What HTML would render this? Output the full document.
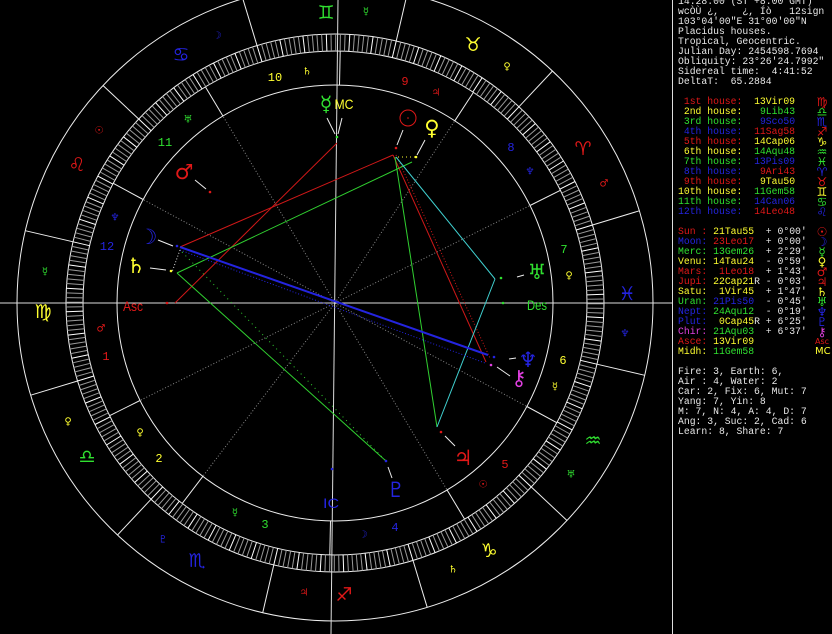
<!DOCTYPE html>
<html><head><meta charset="utf-8">
<style>
html,body{margin:0;padding:0;background:#000;width:832px;height:634px;overflow:hidden}
#c{position:absolute;left:0;top:0}
#p{position:absolute;left:678px;top:-3px;margin:0;font-family:"Liberation Mono",monospace;font-size:9.75px;line-height:10px;color:#e8e8e8;white-space:pre}
.r{color:#e01818}.y{color:#ffff30}.g{color:#30e030}.b{color:#2424e0}.m{color:#e040e0}
#vl{position:absolute;left:672px;top:0;width:1px;height:634px;background:#ddd}
.gl{position:absolute;left:815px;width:14px;text-align:center;font-family:"DejaVu Sans",sans-serif;font-size:12px;line-height:12px}
</style></head><body>
<svg id="c" width="672" height="634" xmlns="http://www.w3.org/2000/svg" font-family="DejaVu Sans, sans-serif" text-anchor="middle" dominant-baseline="central">
<g id="geo"></g>
<line x1="0" y1="303" x2="672" y2="303" stroke="#ddd" stroke-width="1"/>
<line x1="338" y1="0" x2="331" y2="634" stroke="#ddd" stroke-width="1"/>
<g stroke-width="1" fill="none">
<line x1="175" y1="303" x2="337" y2="143" stroke="#d01818"/>
<line x1="180" y1="247" x2="393" y2="155" stroke="#d01818"/>
<line x1="393" y1="155" x2="486" y2="362" stroke="#d01818"/>
<line x1="396" y1="155" x2="490" y2="358" stroke="#d01818" stroke-dasharray="1 2"/>
<line x1="177" y1="273" x2="412" y2="162" stroke="#30d030"/>
<line x1="177" y1="273" x2="386" y2="461" stroke="#30d030"/>
<line x1="182" y1="252" x2="386" y2="461" stroke="#30d030" stroke-dasharray="1 4"/>
<line x1="395" y1="157" x2="437" y2="427" stroke="#30d030"/>
<line x1="396" y1="157" x2="495" y2="279" stroke="#40d0d0"/>
<line x1="495" y1="279" x2="437" y2="427" stroke="#40d0d0"/>
<line x1="180" y1="247" x2="488" y2="355" stroke="#2424e0" stroke-width="2"/>
<line x1="180" y1="250" x2="485" y2="363" stroke="#2424e0" stroke-dasharray="1 2"/>
<line x1="180" y1="250" x2="172" y2="272" stroke="#ddd" stroke-dasharray="1 2"/>
<line x1="398" y1="157" x2="415" y2="157" stroke="#ffff30" stroke-dasharray="1 3"/>
</g>
<g stroke="#eee" stroke-width="1">
<line x1="403" y1="130" x2="397" y2="145"/><line x1="425" y1="140" x2="417" y2="155"/>
<line x1="327" y1="118" x2="335" y2="134"/><line x1="342" y1="118" x2="338" y2="134"/>
<line x1="195" y1="180" x2="206" y2="189"/><line x1="158" y1="240" x2="173" y2="246"/>
<line x1="150" y1="268" x2="166" y2="270"/><line x1="517" y1="277" x2="524" y2="275"/>
<line x1="509" y1="359" x2="516" y2="358"/><line x1="497" y1="367" x2="510" y2="376"/>
<line x1="445" y1="436" x2="455" y2="446"/><line x1="388" y1="467" x2="392" y2="478"/>
</g>
<g>
<circle cx="396" cy="148" r="1.3" fill="#e01818"/><circle cx="416" cy="157" r="1.3" fill="#ffff30"/>
<circle cx="337" cy="137" r="1.3" fill="#30e030"/><circle cx="210" cy="192" r="1.3" fill="#e01818"/>
<circle cx="177" cy="246" r="1.3" fill="#2424e0"/><circle cx="171" cy="271" r="1.3" fill="#ffff30"/>
<circle cx="167" cy="303" r="1.3" fill="#e01818"/><circle cx="501" cy="278" r="1.3" fill="#30e030"/>
<circle cx="503" cy="303" r="1.3" fill="#30e030"/><circle cx="494" cy="357" r="1.3" fill="#2424e0"/>
<circle cx="491" cy="365" r="1.3" fill="#e040e0"/><circle cx="441" cy="432" r="1.3" fill="#e01818"/>
<circle cx="386" cy="461" r="1.3" fill="#2424e0"/><circle cx="332" cy="469" r="1.3" fill="#2424e0"/>
</g>
<g font-size="19">
<text x="583" y="149" fill="#e01818">♈︎</text><text x="473" y="45" fill="#ffff30">♉︎</text>
<text x="326" y="13" fill="#30e030">♊︎</text><text x="181" y="55" fill="#2424e0">♋︎</text>
<text x="77" y="165" fill="#e01818">♌︎</text><text x="43" y="312" fill="#ffff30">♍︎</text>
<text x="87" y="457" fill="#30e030">♎︎</text><text x="197" y="561" fill="#2424e0">♏︎</text>
<text x="344" y="595" fill="#e01818">♐︎</text><text x="489" y="551" fill="#ffff30">♑︎</text>
<text x="593" y="441" fill="#30e030">♒︎</text><text x="627" y="294" fill="#2424e0">♓︎</text>
</g>
<g font-size="10">
<text x="604" y="184" fill="#e01818">♂</text><text x="507" y="67" fill="#ffff30">♀</text>
<text x="366" y="12" fill="#30e030">☿</text><text x="217" y="36" fill="#2424e0">☽</text>
<text x="99" y="131" fill="#e01818">☉</text><text x="45" y="272" fill="#30e030">☿</text>
<text x="68" y="422" fill="#ffff30">♀</text><text x="163" y="540" fill="#2424e0">♇</text>
<text x="304" y="593" fill="#e01818">♃</text><text x="453" y="570" fill="#ffff30">♄</text>
<text x="571" y="475" fill="#30e030">♅</text><text x="625" y="334" fill="#2424e0">♆</text>
</g>
<g font-family="Liberation Mono, monospace" font-size="12">
<text x="275" y="78" fill="#ffff30">10</text><text x="165" y="143" fill="#30e030">11</text>
<text x="107" y="247" fill="#2424e0">12</text><text x="106" y="357" fill="#e01818">1</text>
<text x="159" y="459" fill="#ffff30">2</text><text x="265" y="525" fill="#30e030">3</text>
<text x="395" y="528" fill="#2424e0">4</text><text x="505" y="465" fill="#e01818">5</text>
<text x="563" y="361" fill="#ffff30">6</text><text x="564" y="250" fill="#30e030">7</text>
<text x="511" y="148" fill="#2424e0">8</text><text x="405" y="82" fill="#e01818">9</text>
</g>
<g font-size="10">
<text x="307" y="72" fill="#ffff30">♄</text><text x="188" y="120" fill="#30e030">♅</text>
<text x="115" y="218" fill="#2424e0">♆</text><text x="101" y="329" fill="#e01818">♂</text>
<text x="140" y="433" fill="#ffff30">♀</text><text x="235" y="513" fill="#30e030">☿</text>
<text x="363" y="535" fill="#2424e0">☽</text><text x="483" y="485" fill="#e01818">☉</text>
<text x="555" y="387" fill="#ffff30">☿</text><text x="569" y="276" fill="#ffff30">♀</text>
<text x="530" y="172" fill="#2424e0">♆</text><text x="436" y="93" fill="#e01818">♃</text>
</g>
<g font-size="21">
<circle cx="408" cy="118" r="8" fill="none" stroke="#e01818"/><circle cx="408" cy="118" r="0.8" fill="#e01818"/>
<text x="432" y="128" fill="#ffff30">♀</text>
<text x="326" y="104" fill="#30e030">☿</text>
<text x="184" y="172" fill="#e01818">♂</text>
<text x="148" y="237" fill="#2424e0">☽</text>
<text x="136" y="266" fill="#ffff30">♄</text>
<text x="537" y="272" fill="#30e030">♅</text>
<text x="528" y="360" fill="#2424e0">♆</text>
<text x="519" y="378" fill="#e040e0">⚷</text>
<text x="463" y="458" fill="#e01818">♃</text>
<text x="396" y="490" fill="#2424e0">♇</text>
</g>
<g font-family="Liberation Sans, sans-serif" font-size="14">
<text x="344" y="104" fill="#ffff30" textLength="19" lengthAdjust="spacingAndGlyphs">MC</text>
<text x="133" y="306" fill="#e01818" textLength="20" lengthAdjust="spacingAndGlyphs">Asc</text>
<text x="537" y="305" fill="#30e030" textLength="20" lengthAdjust="spacingAndGlyphs">Des</text>
<text x="331" y="503" fill="#2424e0" textLength="16" lengthAdjust="spacingAndGlyphs">IC</text>
</g>
</svg>
<div id="vl"></div>
<pre id="p">14:28:00 (ST +8:00 GMT)
wcÒÙ ¿,    ¿, Íò   12sign
103°04'00"E 31°00'00"N
Placidus houses.
Tropical, Geocentric.
Julian Day: 2454598.7694
Obliquity: 23°26'24.7992"
Sidereal time:  4:41:52
DeltaT:  65.2884

<span class="r"> 1st house:</span>  <span class="y">13Vir09</span>
<span class="y"> 2nd house:</span>   <span class="g">9Lib43</span>
<span class="g"> 3rd house:</span>   <span class="b">9Sco50</span>
<span class="b"> 4th house:</span>  <span class="r">11Sag58</span>
<span class="r"> 5th house:</span>  <span class="y">14Cap06</span>
<span class="y"> 6th house:</span>  <span class="g">14Aqu48</span>
<span class="g"> 7th house:</span>  <span class="b">13Pis09</span>
<span class="b"> 8th house:</span>   <span class="r">9Ari43</span>
<span class="r"> 9th house:</span>   <span class="y">9Tau50</span>
<span class="y">10th house:</span>  <span class="g">11Gem58</span>
<span class="g">11th house:</span>  <span class="b">14Can06</span>
<span class="b">12th house:</span>  <span class="r">14Leo48</span>

<span class="r">Sun :</span> <span class="y">21Tau55</span>  + 0°00'
<span class="b">Moon:</span> <span class="r">23Leo17</span>  + 0°00'
<span class="g">Merc:</span> <span class="g">13Gem26</span>  + 2°29'
<span class="y">Venu:</span> <span class="y">14Tau24</span>  - 0°59'
<span class="r">Mars:</span>  <span class="r">1Leo18</span>  + 1°43'
<span class="r">Jupi:</span> <span class="y">22Cap21</span>R - 0°03'
<span class="y">Satu:</span>  <span class="y">1Vir45</span>  + 1°47'
<span class="g">Uran:</span> <span class="b">21Pis50</span>  - 0°45'
<span class="b">Nept:</span> <span class="g">24Aqu12</span>  - 0°19'
<span class="b">Plut:</span>  <span class="y">0Cap45</span>R + 6°25'
<span class="m">Chir:</span> <span class="g">21Aqu03</span>  + 6°37'
<span class="r">Asce:</span> <span class="y">13Vir09</span>
<span class="y">Midh:</span> <span class="g">11Gem58</span>

Fire: 3, Earth: 6,
Air : 4, Water: 2
Car: 2, Fix: 6, Mut: 7
Yang: 7, Yin: 8
M: 7, N: 4, A: 4, D: 7
Ang: 3, Suc: 2, Cad: 6
Learn: 8, Share: 7</pre>
<div class="gl r" style="top:96px">♍</div><div class="gl g" style="top:106px">♎</div>
<div class="gl b" style="top:116px">♏</div><div class="gl r" style="top:126px">♐</div>
<div class="gl y" style="top:136px">♑</div><div class="gl g" style="top:146px">♒</div>
<div class="gl g" style="top:156px">♓</div><div class="gl b" style="top:166px">♈</div>
<div class="gl r" style="top:176px">♉</div><div class="gl y" style="top:186px">♊</div>
<div class="gl g" style="top:196px">♋</div><div class="gl b" style="top:206px">♌</div>
<div class="gl r" style="top:226px">☉</div><div class="gl b" style="top:236px">☽</div>
<div class="gl g" style="top:246px">☿</div><div class="gl y" style="top:256px">♀</div>
<div class="gl r" style="top:266px">♂</div><div class="gl r" style="top:276px">♃</div>
<div class="gl y" style="top:286px">♄</div><div class="gl g" style="top:296px">♅</div>
<div class="gl b" style="top:306px">♆</div><div class="gl b" style="top:316px">♇</div>
<div class="gl m" style="top:326px">⚷</div><div class="gl r" style="top:336px;font-size:8px">Asc</div>
<div class="gl y" style="top:346px;font-size:10px">MC</div>
<script>
(function(){
var cx=335,cy=303,g=document.getElementById('geo'),s='';
function P(deg,r){var a=deg*Math.PI/180;return [cx+r*Math.cos(a),cy-r*Math.sin(a)];}
function L(a,b,st,w,extra){return '<line x1="'+a[0].toFixed(1)+'" y1="'+a[1].toFixed(1)+'" x2="'+b[0].toFixed(1)+'" y2="'+b[1].toFixed(1)+'" stroke="'+st+'" stroke-width="'+(w||1)+'" '+(extra||'')+'/>';}
s+='<circle cx="'+cx+'" cy="'+cy+'" r="318" fill="none" stroke="#eee"/>';
s+='<circle cx="'+cx+'" cy="'+cy+'" r="269" fill="none" stroke="#eee"/>';
s+='<circle cx="'+cx+'" cy="'+cy+'" r="252" fill="none" stroke="#eee"/>';
s+='<circle cx="'+cx+'" cy="'+cy+'" r="218" fill="none" stroke="#eee"/>';
for(var i=0;i<360;i++){var d=i+16.85;s+=L(P(d,252),P(d,269),i%5==0?'#fff':'#999',1);}
for(var k=0;k<12;k++){var d=k*30+16.85;s+=L(P(d,269),P(d,318),'#eee',1);}
var h=[163.15,189.72,215.83,251.97,284.1,314.8,343.15,9.72,39.83,71.97,104.1,134.8];
for(var j=0;j<12;j++){var d=h[j]+16.85;s+=L(P(d,218),P(d,252),'#eee',1);
 if(j!=0&&j!=3&&j!=6&&j!=9)s+=L(P(d,0),P(d,218),'#888',1,'stroke-dasharray="1 2"');}
g.innerHTML=s;
})();
</script>
</body></html>
